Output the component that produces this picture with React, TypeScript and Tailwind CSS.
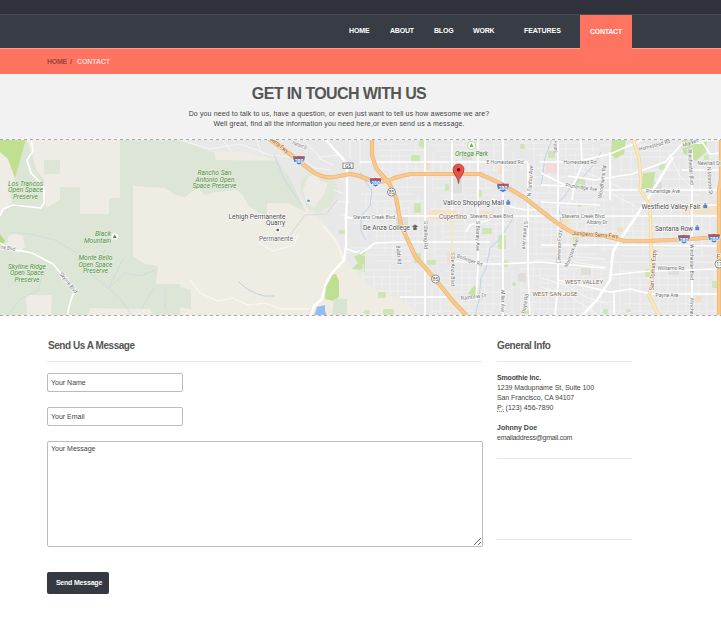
import React from "react";

type LabelProps = {
  x: number;
  y: number;
  w: number;
  children: string;
  size?: number;
  fill?: string;
  rotate?: number;
  italic?: boolean;
  halo?: string;
};

function Label({ x, y, w, children, size = 7, fill = "#4a4a4a", rotate = 0, italic = false, halo = "#ffffff" }: LabelProps) {
  return (
    <text
      x={x}
      y={y}
      textAnchor="middle"
      textLength={w}
      lengthAdjust="spacingAndGlyphs"
      fontSize={size}
      fill={fill}
      fontStyle={italic ? "italic" : "normal"}
      stroke={halo}
      strokeWidth={1.2}
      strokeLinejoin="round"
      paintOrder="stroke"
      transform={rotate ? `rotate(${rotate} ${x} ${y})` : undefined}
    >
      {children}
    </text>
  );
}

function Shield({ x, y }: { x: number; y: number }) {
  return (
    <g transform={`translate(${x} ${y})`}>
      <path d="M-5.5-4Q-3-3.2 0-4.2Q3-3.2 5.5-4Q8 2 0 5Q-8 2-5.5-4Z" fill="#4a78b8" stroke="#fff" strokeWidth=".7" />
      <path d="M-5.5-4Q-3-3.2 0-4.2Q3-3.2 5.5-4L6-2H-6Z" fill="#c9504a" />
      <text x="0" y="2.6" textAnchor="middle" fontSize="5" fontWeight="700" fill="#fff">280</text>
    </g>
  );
}

function Route({ x, y, n }: { x: number; y: number; n: string }) {
  return (
    <g>
      <circle cx={x} cy={y} r="4" fill="#fff" stroke="#777" strokeWidth=".8" />
      <text x={x} y={y + 1.9} textAnchor="middle" fontSize="5" fill="#555">{n}</text>
    </g>
  );
}

const minorX = [364, 375, 383, 391, 399, 407, 416, 433, 441, 463, 470, 486, 494, 513, 522, 534, 541, 549, 566, 575, 584, 593, 602, 611, 621, 631, 641, 660, 669, 679, 687, 700, 708, 716];
const minorY = [144, 150, 156, 169, 178, 187, 194, 201, 208, 223, 230, 236, 248, 255, 261, 270, 277, 284, 291, 303, 310];

const parks: [number, number, number, number][] = [
  [419, 140, 6, 7], [411, 155, 9, 8], [414, 203, 7, 10], [445, 184, 4, 7], [478, 190, 4, 7], [482, 228, 10, 6], [498, 235, 8, 14],
  [414, 253, 7, 10], [427, 260, 9, 5], [378, 292, 8, 6], [383, 309, 11, 6], [364, 310, 6, 4], [503, 260, 5, 7], [512, 282, 4, 4],
  [548, 151, 7, 7], [575, 178, 10, 8], [573, 237, 6, 6], [577, 203, 5, 4], [611, 149, 10, 7], [645, 269, 5, 8], [712, 281, 9, 7],
  [704, 155, 5, 5], [626, 309, 5, 3], [603, 309, 5, 5], [659, 164, 6, 6], [525, 310, 6, 4], [520, 144, 5, 5], [339, 230, 7, 4],
];
const blocks: [number, number, number, number, string][] = [
  [421, 141, 5, 8, "#f2dfc2"], [425, 163, 5, 6, "#f2dfc2"], [428, 210, 28, 9, "#f3e2c8"], [480, 211, 14, 8, "#f3e2c8"], [447, 252, 8, 12, "#f3e2c8"],
  [498, 165, 6, 9, "#f3e2c8"], [560, 218, 9, 7, "#f3e2c8"], [617, 227, 6, 5, "#f2dfc2"], [682, 203, 39, 11, "#f3e2c8"], [695, 296, 6, 6, "#f2dfc2"],
  [546, 161, 12, 12, "#f3dadb"], [450, 176, 12, 17, "#dfdfdf"], [462, 153, 10, 7, "#dfded8"], [396, 216, 12, 10, "#dfded8"], [518, 273, 8, 9, "#dfded8"],
  [650, 182, 12, 8, "#dcdcdc"], [668, 267, 11, 8, "#dfded8"], [581, 268, 10, 7, "#dfded8"],
];

function AreaMap() {
  const green = "#4f8f3c";
  const road = "#707070";
  return (
    <svg className="block h-[177px] w-full" viewBox="0 139 721 177" preserveAspectRatio="none" fontFamily="Roboto, 'Liberation Sans', sans-serif">
      <defs>
        <clipPath id="town">
          <path d="M378 139H721V316H425L400 299L366 286L350 269L340 250L352 225L362 190L378 175Z" />
        </clipPath>
      </defs>
      <rect x="0" y="139" width="721" height="177" fill="#e8e8e8" />
      {/* open space and foothills */}
      <path d="M0 139H180V316H0Z" fill="#dce5d6" />
      <path d="M180 144L214 153L216 160L277 161L290 178L309 212L318 217L335 236L348 262L368 286L400 299L424 316H180Z" fill="#efece4" />
      <path d="M120 139H176L214 153L216 160L277 161L290 178L306 212L288 203H267V216L258 212L248 205L243 195L237 190L216 192L205 195L198 188L190 193L185 198L174 194L165 188H133V258L145 264L158 266L156 283L180 284V316H120Z" fill="#dce5d6" />
      <path d="M133 186L165 188L174 194L185 198L190 193V284H156L158 266L145 264L133 256Z" fill="#efece4" />
      <path d="M26 139H120V198H109V214H80V187H60V200L46 208L44 180L36 169L32 155Z" fill="#efebe5" />
      <path d="M44 160H60V174H44Z" fill="#dce5d6" />
      <path d="M0 150L9 160L15 178L10 192L12 202L0 216Z" fill="#efebe5" />
      <path d="M0 139H26L15 178L8 159L0 152Z" fill="#c0df8f" />
      <path d="M0 234L5 241L2 245H0Z" fill="#b4d980" />
      <path d="M8 236L14 234L23 236L25 247L18 253L7 247ZM26 295H52L51 316H27ZM90 308L150 309L154 316H88Z" fill="#efebe5" />
      <path d="M180 287L191 290V309L180 307Z" fill="#dce5d6" />
      <path d="M302 178L313 172L320 177L335 181L338 193L331 205L318 213L307 208L300 187Z" fill="#dfe7d8" />
      <path d="M303 190L308 177L317 173L320 181L328 183L324 194L318 202L314 208L306 202Z" fill="#efece5" />
      <path d="M326 283L331 275L336 274L339 281V297L334 301L325 299Z" fill="#bfe093" />
      <path d="M334 299H347V316H332Z" fill="#d9e4d2" />
      <path d="M354 257L365 251V272L352 269L358 263Z" fill="#c8e3a5" />
      <path d="M317 307L325 305V311L327 316H314Z" fill="#93bdf0" />
      <path d="M214 152H244L276 160H216Z" fill="#efece4" />
      <g fill="none" stroke="#c9dbe0" strokeWidth=".8">
        <path d="M10 232L30 234L55 240L80 255L91 274L108 288L120 299L132 315M108 289L125 273L140 276L155 270M91 274L99 263L105 250M109 287L120 265L123 258M141 310L150 294L154 288M10 313L20 299L38 291L42 275M165 308V289" />
      </g>
      <path d="M239 282Q248 292 264 296H275" fill="none" stroke="#b8c8d8" strokeWidth=".8" />
      <path d="M190 280L200 293L218 301L232 298L248 305L265 303L280 309H310M258 242L273 251L294 245L298 235M323 226L337 242L344 262" fill="none" stroke="#f8f6f0" strokeWidth="1.3" />
      <path d="M305 215L290 235M305 215L326 214L337 200" fill="none" stroke="#d9d9d5" strokeWidth="1.2" />
      <g fill="none" stroke="#fff" strokeWidth="1.7">
        <path d="M31 139L33 151L27 160L31 173L38 180L44 188V203L41 208L13 205L3 209L0 216M0 243L12 250L22 251L32 253L53 264L58 270L75 289L71 300L68 311V316" />
      </g>
      {/* street grid */}
      <g clipPath="url(#town)">
        <g stroke="#f2f2f2" strokeWidth=".8" fill="none">
          {minorX.map((x, i) => (
            <path key={x} d={`M${x} ${139 + (i % 3) * 12}V${172 + (i % 2) * 20}M${x + 2} ${196 + (i % 3) * 5}V${240 + (i % 4) * 6}M${x - 1} ${264 + (i % 3) * 6}V316`} />
          ))}
          {minorY.map((y, i) => (
            <path key={y} d={`M${350 + (i % 3) * 12} ${y}H${412 + (i % 2) * 14}M${430 + (i % 4) * 5} ${y + 1}H${510 - (i % 3) * 9}M${520 + (i % 3) * 7} ${y - 1}H${590 + (i % 4) * 8}M${600 + (i % 2) * 20} ${y + 1}H${700 + (i % 3) * 9}`} />
          ))}
        </g>
      </g>
      <g stroke="#f7f7f7" strokeWidth=".9" fill="none">
        <path d="M180 140L210 149L240 144L270 155L300 158L315 168L330 170M222 139L231 151M256 139L263 156M302 139L320 157L340 155M325 139L338 155M318 158L333 165M330 176L345 180M334 190L344 194M338 202H350M340 214L352 218M350 139V158M360 139V166" />
        <path d="M541 278L565 285L588 298L608 303M541 287L570 296L598 315M567 256L605 259M560 260L607 267M610 193L637 207M580 170L620 187M669 153L680 176L690 186" />
      </g>
      {blocks.map(([x, y, w, h, c]) => <rect key={`${x}-${y}`} x={x} y={y} width={w} height={h} rx="1" fill={c} />)}
      {parks.map(([x, y, w, h]) => <rect key={`${x}-${y}`} x={x} y={y} width={w} height={h} rx="1.5" fill="#cfe5b4" />)}
      <path d="M612 139H626L624 154L615 159L611 153ZM643 173L655 172L653 187L641 190ZM682 139H707L706 152L696 161L683 153ZM468 293L475 285L479 297L469 296Z" fill="#c6e2a3" />
      <g fill="none" stroke="#bfd2e6" strokeWidth="1">
        <path d="M513 218L500 239L490 248L486 268L481 278L479 300L475 316M360 172L366 182L372 190L370 206L361 216V231L366 240M601 152L595 163L583 177L571 187L563 198L558 202L562 229L556 264M552 139L545 158L541 186" />
        <path d="M274 154L284 179L302 206" stroke="#cad8e8" />
      </g>
      <g fill="none" stroke="#fff" strokeWidth="1.7">
        <path d="M425 139V316M452 139V316M478 139V268L476 300M503 139V316M528 163V268L530 316M558 139V284L555 316M581 139L582 165L574 184L572 200M610 152V200M692 150V316" />
        <path d="M360 162H528M376 216H721M344 218H376M360 254L375 243L400 242H490M400 297H453M453 261L482 264L500 264L540 262L605 268M541 185L565 186L600 190L721 190M540 162L575 162L610 154L638 142L642 139M568 176L595 180L632 174L665 162L683 143L721 139M541 245H605L721 246M610 275L650 271L721 269M558 280L610 292L631 289L650 294H721M466 232L470 225L490 220M541 202L600 205M650 205H721" />
        <path d="M673 157L652 192L637 215L620 240L613 252L610 280L597 300L582 316" strokeWidth="2.6" />
        <path d="M325 139L344 160L347 170V199L346 220V246L344 260L332 273L325 286L322 299L314 306L311 316" strokeWidth="2.4" />
        <path d="M347 249L355 252L360 251" />
        <path d="M452 210V316" stroke="#f6e3bd" />
        <path d="M492 199L515 208L528 210L541 209M685 143L703 143L710 154L721 153M682 170H721M541 173L569 187M614 292V316" />
      </g>
      <path d="M633 139L639 158L641 181L640 190L650 205L651 240L652 280L649 296L659 316" fill="none" stroke="#edd69c" strokeWidth="3.4" />
      <path d="M633 139L639 158L641 181L640 190L650 205L651 240L652 280L649 296L659 316" fill="none" stroke="#fbeabd" strokeWidth="2" />
      <g fill="none" stroke="#e8b57a" strokeWidth="4.2">
        <path d="M269 139L286 151L300 162L313 172Q324 179 335 177L350 174L360 176Q380 186 394 178L410 174H480L500 183L525 198L553 220Q572 234 580 234L605 236L625 241H650L689 239L721 237" />
        <path d="M372 139V155L376 168L389 183L396 198L401 225L415 256L436 280L452 300L467 316M721 139V180L719 190V316" />
      </g>
      <g fill="none" stroke="#fac98a" strokeWidth="2.8">
        <path d="M269 139L286 151L300 162L313 172Q324 179 335 177L350 174L360 176Q380 186 394 178L410 174H480L500 183L525 198L553 220Q572 234 580 234L605 236L625 241H650L689 239L721 237" />
        <path d="M372 139V155L376 168L389 183L396 198L401 225L415 256L436 280L452 300L467 316M721 139V180L719 190V316" />
      </g>
      {/* park names */}
      <g>
        {([
          [25.5, 185.5, 35, "Los Trancos"], [25.5, 192, 35, "Open Space"], [25.5, 198.5, 25, "Preserve"],
          [103, 236, 16, "Black"], [97.5, 242.5, 27, "Mountain"],
          [95.5, 260, 34, "Monte Bello"], [95.5, 266.5, 34, "Open Space"], [95.5, 273, 25, "Preserve"],
          [27, 268.5, 38, "Skyline Ridge"], [27, 275, 34, "Open Space"], [27, 281.5, 25, "Preserve"],
          [214.5, 175, 34, "Rancho San"], [215, 181.5, 39, "Antonio Open"], [214.5, 188, 44, "Space Preserve"],
          [471.5, 155.5, 33, "Ortega Park"],
        ] as [number, number, number, string][]).map(([x, y, w, t]) => (
          <Label key={`${x}-${y}`} x={x} y={y} w={w} fill={green} italic halo="#e9f0e3">{t}</Label>
        ))}
      </g>
      <Label x={257} y={218.5} w={57}>Lehigh Permanente</Label>
      <Label x={275.5} y={225} w={19}>Quarry</Label>
      <Label x={276} y={241} w={34} fill="#66635c">Permanente</Label>
      <rect x="275.4" y="227.7" width="4.6" height="4.6" rx="1.5" fill="#fff" /><circle cx="277.7" cy="230" r="1.3" fill="#555" />
      <circle cx="114.7" cy="236.5" r="3.2" fill="#fff" /><path d="M112.7 238L114.7 234.5L116.7 238Z" fill="#5e8b58" />
      <Label x={473.5} y={205} w={61}>Vallco Shopping Mall</Label>
      <Label x={386.5} y={229.5} w={47}>De Anza College</Label>
      <Label x={453} y={218.5} w={28} fill="#80664a">Cupertino</Label>
      <Label x={671} y={208.5} w={59}>Westfield Valley Fair</Label>
      <Label x={674} y={230.5} w={38}>Santana Row</Label>
      <Label x={584} y={283.5} w={38} size={6.2} fill="#79654f">WEST VALLEY</Label>
      <Label x={555} y={295.5} w={45} size={6.2} fill="#79654f">WEST SAN JOSE</Label>
      <Label x={595} y={236.5} w={46} size={6} rotate={4} fill="#8d5932" halo="#fde3bf">Junipero Serra Fwy</Label>
      <Label x={655} y={270} w={41} size={6.3} rotate={-86} fill="#8d5932">San Tomas Expy</Label>
      <Label x={278} y={146.5} w={22} size={6} rotate={39} fill="#8d5932" halo="#fde3bf">Serra Fwy</Label>
      <Label x={718.5} y={259} w={4} size={6.5} fill="#8d5932">F</Label>
      {([
        [505, 164, 37, 0, "E Homestead Rd"], [491.5, 218, 43, 0, "Stevens Creek Blvd"], [374, 218.5, 42, 0, "Stevens Creek Blvd"],
        [580, 163.5, 33, 0, "Homestead Rd"], [581, 189, 32, 8, "Pruneridge Ave"], [663, 192.5, 34, 0, "Pruneridge Ave"],
        [583, 217.5, 43, 0, "Stevens Creek Blvd"], [597, 224, 21, 0, "Albany Dr"], [671, 270, 27, 0, "Williams Rd"],
        [667, 297, 23, 0, "Payne Ave"], [709, 164.5, 23, 0, "Newhall St"], [655, 147, 32, -15, "Homestead Rd"],
        [691, 144.5, 16, -20, "Market"], [469, 262, 27, 20, "Bollinger Rd"], [474, 298.5, 26, -7, "Rainbow Dr"],
        [424, 235, 28, 90, "S Stelling Rd"], [451, 269, 34, 90, "S De Anza Blvd"], [476, 236, 30, 90, "S Blaney Ave"],
        [397, 255, 19, 86, "Bubb Rd"], [532, 181, 31, -86, "N Tantau Ave"], [523, 235, 28, 94, "S Tantau Ave"],
        [501, 301, 22, 90, "Miller Ave"], [527, 304, 20, -80, "Doyle Rd"], [604, 182, 33, -82, "Woodhams Rd"],
        [561, 247, 33, -88, "Lawrence Expy"], [573, 254, 30, -68, "Moorpark Ave"], [689, 167, 36, 86, "Winchester Blvd"],
        [690, 262, 36, 90, "Winchester Blvd"], [690, 306, 17, 90, "Winche"], [708, 181, 28, 86, "N Monroe St"],
        [299, 147, 15, 22, "Fremont St"], [67, 284, 25, 51, "Skyline Blvd"], [8, 250, 14, 8, "ne Blvd"], [557, 147, 12, -87, "Quail Ave"],
      ] as [number, number, number, number, string][]).map(([x, y, w, r, t]) => (
        <Label key={`${x}-${y}`} x={x} y={y} w={w} rotate={r} size={5.6} fill={road}>{t}</Label>
      ))}
      <g fill="#5a82c3" stroke="#fff" strokeWidth=".5">
        <path d="M506 201H510.5V205H506ZM703 204.5H707.5V208.5H703ZM695 226.5H699.5V230.5H695ZM307 199.5H310V202H307Z" />
        <path d="M507 201V199.5H509.5V201M704 204.5V203H706.5V204.5M696 226.5V225H698.5V226.5" />
      </g>
      <path d="M412 226.5L415 224.5L418 226.5L415 228.5ZM413.3 228H416.7V230H413.3Z" fill="#666" />
      <circle cx="471.5" cy="145.5" r="4" fill="#fff" stroke="#c3e19d" strokeWidth="1.2" /><path d="M469.5 147L471.5 143L473.5 147Z" fill="#78ab54" />
      <Shield x={299} y={160} /><Shield x={375.5} y={182} /><Shield x={503} y={187.5} /><Shield x={684} y={239} /><Shield x={714} y={238} />
      <Route x={391.5} y={192} n="85" /><Route x={435.5} y={279} n="85" /><Route x={719} y={264} n="17" />
      <rect x="343" y="163" width="10" height="5.6" fill="#fff" stroke="#777" strokeWidth=".8" />
      <text x="348" y="167.8" textAnchor="middle" fontSize="5" fill="#555">G5</text>
      <path d="M458.5 183.5C458.5 177 453 175 453 169.5A5.3 5.3 0 0 1 464 169.5C464 175 458.5 177 458.5 183.5Z" fill="#ec5148" stroke="#9e302b" strokeWidth=".7" />
      <circle cx="458.5" cy="169.8" r="1.8" fill="#641713" />
      <path d="M0 139.5H721M0 315.5H721" stroke="#f5f5f5" strokeWidth="1" />
      <path d="M0 139.5H721M0 315.5H721" stroke="#aaa" strokeWidth="1" strokeDasharray="3 3" />
    </svg>
  );
}

const nav = [
  { t: "HOME", c: "ml-[349px] w-[41px] tracking-[-0.15px]" },
  { t: "ABOUT", c: "w-[44px] tracking-[-0.2px]" },
  { t: "BLOG", c: "w-[39px] tracking-[-0.2px]" },
  { t: "WORK", c: "w-[51px] tracking-[-0.2px]" },
  { t: "FEATURES", c: "w-[56px] tracking-[-0.05px]" },
];

export default function App() {
  return (
    <div className="h-[619px] w-[721px] overflow-hidden bg-white font-['Liberation_Sans',Arial,sans-serif] text-[7px] leading-[10px] text-[#444]">
      <header>
        <div className="h-[15px] border-b border-[#484c54] bg-[#2f323a]" />
        <nav className="flex h-[33px] bg-[#383c44] font-bold text-white">
          {nav.map((n) => (
            <a key={n.t} className={`shrink-0 whitespace-nowrap pt-[11px] ${n.c}`}>{n.t}</a>
          ))}
          <a className="z-10 h-[34px] w-[52px] shrink-0 bg-[#ff7461] pt-3 pl-[10px] tracking-[-0.25px]">CONTACT</a>
        </nav>
        <div className="flex h-[26px] border-t border-[#ff9c8d] bg-[#ff7461] pt-2 pl-[47px] font-bold">
          <span className="w-[23px] tracking-[-0.3px] text-[#98453b]">HOME</span>
          <span className="w-[7px] text-[#98453b]">/</span>
          <span className="tracking-[-0.1px] text-[#ffd5ce]">CONTACT</span>
        </div>
      </header>
      <section className="h-[65px] bg-[#f2f2f2] pt-[10px] text-center">
        <div className="w-[678px]">
          <h1 className="text-[16px] leading-5 font-bold tracking-[-0.6px] whitespace-nowrap text-[#555]">GET IN TOUCH WITH US</h1>
          <p className="mt-[5px] whitespace-nowrap">
            <span className="tracking-[0.125px]">Do you need to talk to us, have a question, or even just want to tell us how awesome we are?</span>
            <br />
            <span className="tracking-[0.14px]">Well great, find all the information you need here,or even send us a message.</span>
          </p>
        </div>
      </section>
      <AreaMap />
      <main className="flex gap-[15px] pl-[47px]">
        <form className="w-[435px]">
          <h2 className="mb-[11px] h-[46px] border-b border-[#e6e6e6] pt-6 pl-px text-[10px] leading-3 font-bold tracking-[-0.45px] text-[#555]">Send Us A Message</h2>
          <input className="block h-[19px] w-[136px] rounded-[2px] border border-[#bbb] px-[3px] placeholder:text-[#444] placeholder:opacity-100" placeholder="Your Name" />
          <input className="mt-[15px] block h-[19px] w-[136px] rounded-[2px] border border-[#bbb] px-[3px] placeholder:text-[#444] placeholder:opacity-100" placeholder="Your Email" />
          <textarea className="mt-[15px] block h-[106px] w-[436px] resize rounded-[2px] border border-[#bbb] px-[3px] pt-[2px] placeholder:text-[#444] placeholder:opacity-100" placeholder="Your Message" />
          <button type="button" className="mt-[25px] block h-[22px] w-[62px] rounded-[2px] bg-[#343942] pl-[2px] font-bold whitespace-nowrap text-white tracking-[-0.2px]">Send Message</button>
        </form>
        <aside className="w-[135px]">
          <h2 className="h-[46px] border-b border-[#e6e6e6] pt-6 text-[10px] leading-3 font-bold tracking-[-0.4px] text-[#555]">General Info</h2>
          <address className="h-[97px] border-b border-[#e6e6e6] pt-[11px] whitespace-nowrap not-italic">
            <strong className="tracking-[-0.15px]">Smoothie Inc.</strong><br />
            <span className="tracking-[-0.05px]">1239 Madupname St, Suite 100</span><br />
            <span className="tracking-[-0.1px]">San Francisco, CA 94107</span><br />
            <abbr className="border-b border-dotted border-[#777] no-underline">P:</abbr> (123) 456-7890<br /><br />
            <strong>Johnny Doe</strong><br />
            <a className="tracking-[-0.25px]">emailaddress@gmail.com</a>
          </address>
          <div className="h-[81px] border-b border-[#e6e6e6]" />
        </aside>
      </main>
    </div>
  );
}
